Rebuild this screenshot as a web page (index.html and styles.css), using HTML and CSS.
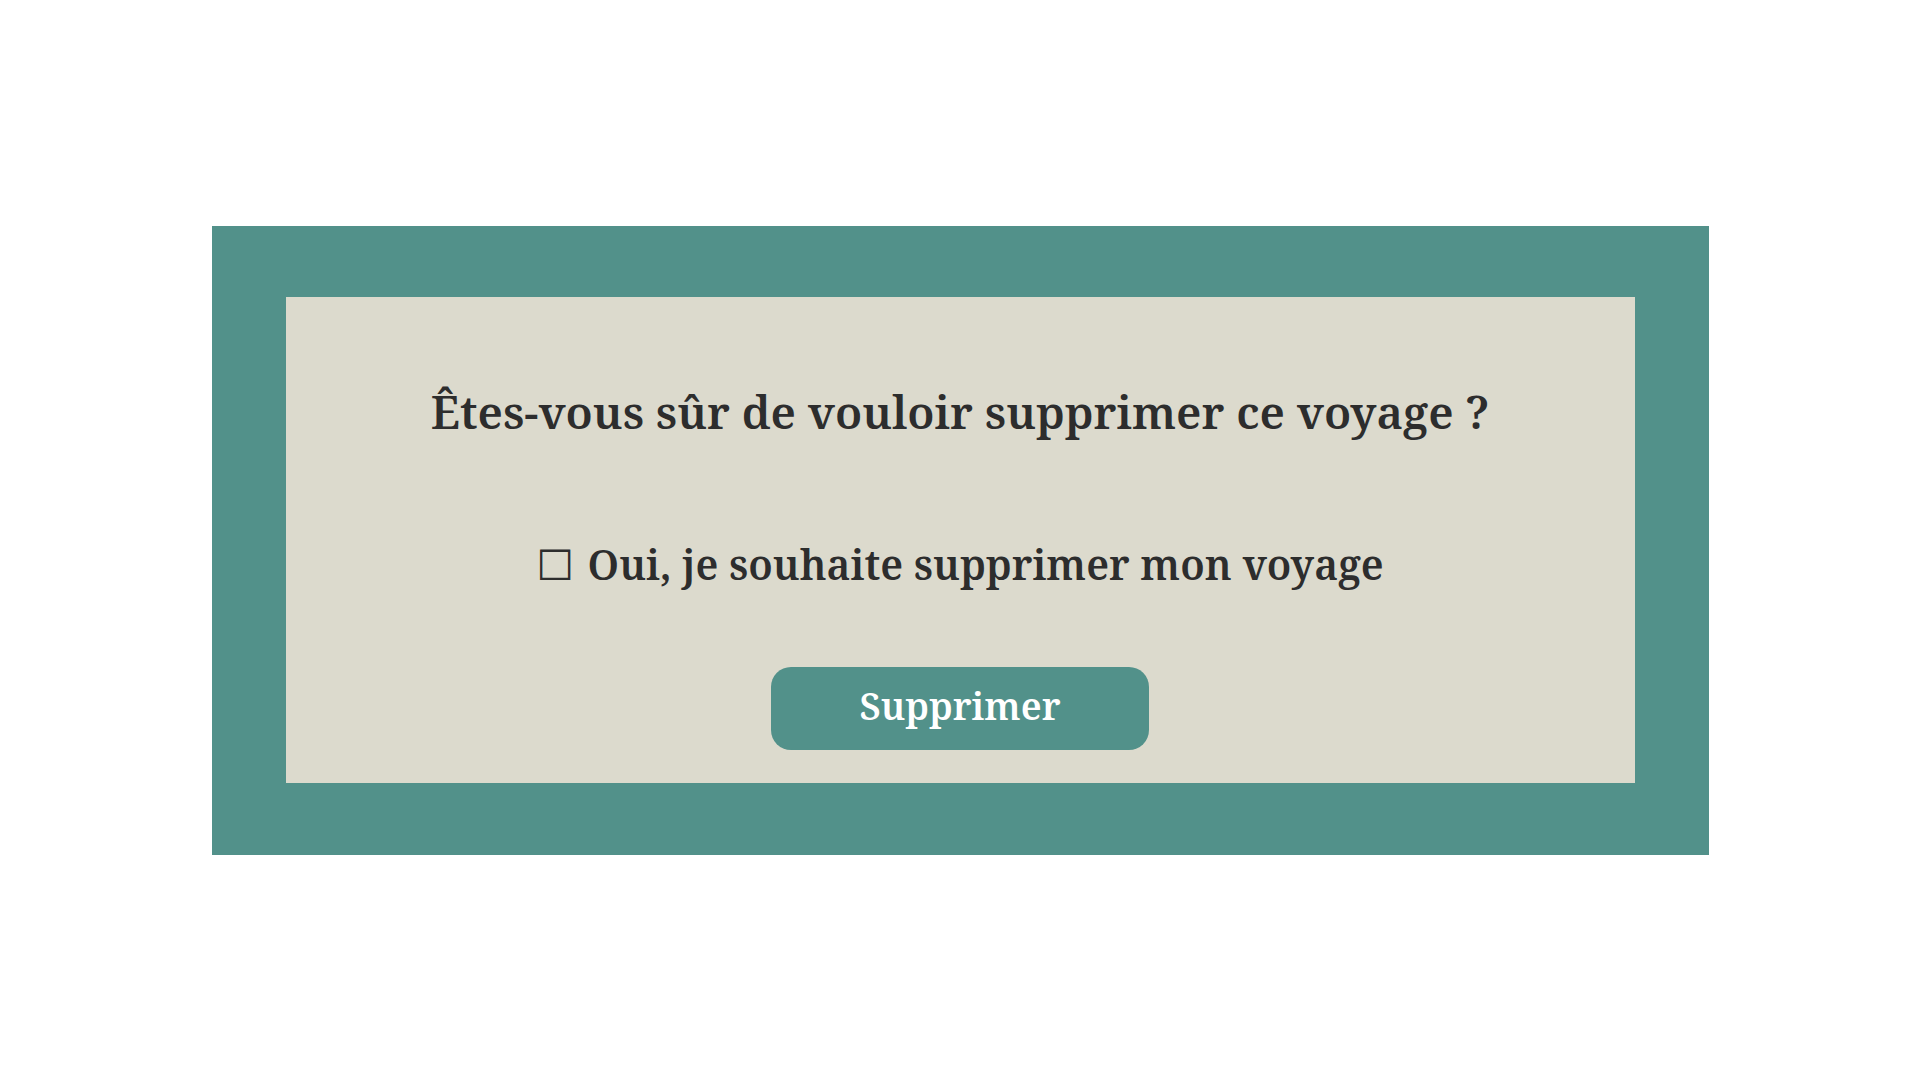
FILE: index.html
```html
<!DOCTYPE html>
<html lang="fr">
<head>
<meta charset="utf-8">
<title>Supprimer le voyage</title>
<link rel="stylesheet" href="styles.css">
</head>
<body>
<main class="page">
  <section class="frame">
    <div class="dialog">
      <h1 class="title">Êtes-vous sûr de vouloir supprimer ce voyage ?</h1>
      <label class="confirm"><span class="box">☐</span> Oui, je souhaite supprimer mon voyage</label>
      <button class="btn" type="button">Supprimer</button>
    </div>
  </section>
</main>
</body>
</html>
```
FILE: styles.css
```css
html, body {
  margin: 0;
  padding: 0;
  background: #ffffff;
}
body {
  font-family: "Noto Serif", "Liberation Serif", serif;
  color: #2d2d2d;
}
.page {
  display: flex;
  justify-content: center;
  padding-top: 226px;
}
.frame {
  width: 1497px;
  box-sizing: border-box;
  background: #52918a;
  padding: 71px 74px 72px 74px;
}
.dialog {
  background: #dcdacd;
  height: 486px;
  box-sizing: border-box;
  display: flex;
  flex-direction: column;
  align-items: center;
  padding-top: 83px;
}
.title {
  margin: 0;
  font-size: 45.5px;
  font-weight: 600;
  line-height: 62px;
  white-space: nowrap;
}
.confirm {
  margin-top: 93px;
  font-size: 41px;
  font-weight: 600;
  line-height: 59px;
  white-space: nowrap;
}
.box {
  font-family: "DejaVu Sans", sans-serif;
  font-weight: normal;
  font-size: 42px;
  line-height: 1;
  margin-right: 3px;
}
.btn {
  margin-top: 73px;
  width: 378px;
  height: 83px;
  padding: 0 0 6px 0;
  border: none;
  border-radius: 20px;
  background: #52918a;
  color: #ffffff;
  font-family: "Noto Serif", "Liberation Serif", serif;
  font-size: 37.5px;
  font-weight: 600;
  cursor: pointer;
}
```
